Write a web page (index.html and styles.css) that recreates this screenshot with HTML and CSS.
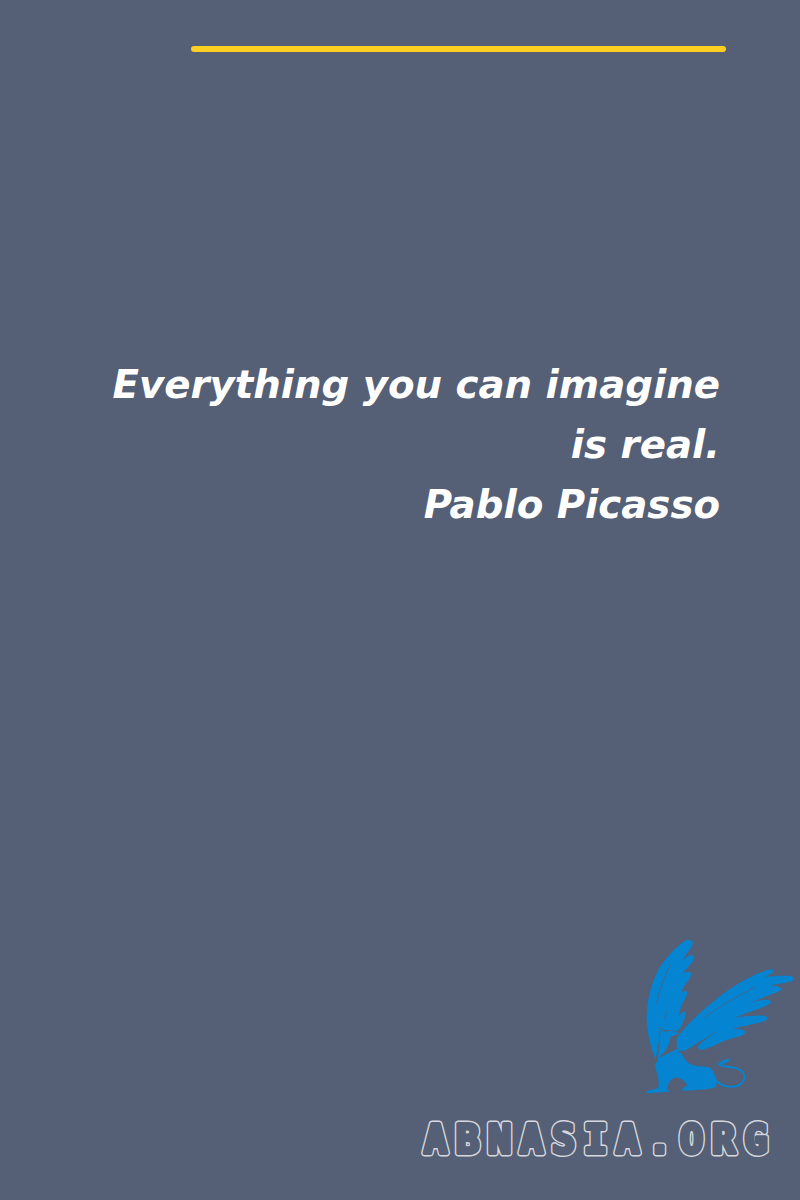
FILE: index.html
```html
<!DOCTYPE html>
<html lang="en">
<head>
<meta charset="utf-8">
<title>Everything you can imagine is real.</title>
<link rel="stylesheet" href="styles.css">
</head>
<body>
<main class="page">
  <div class="bar"></div>
  <blockquote class="quote">Everything you can imagine<br>is real.<br>Pablo Picasso</blockquote>
  <div class="brand">
    <svg class="griffin" viewBox="0 0 510 510" aria-hidden="true">
      <path class="fill" d="M77 388C60 345 49 300 50 255C52 195 72 130 105 90C125 65 145 45 165 32C175 26 190 30 188 42C185 55 170 70 157 92C165 85 180 72 188 76C197 80 192 92 182 102C172 114 165 122 158 130C165 128 175 122 181 128C188 134 178 148 170 158C162 168 158 175 155 188C160 184 168 178 172 188C172 198 160 212 154 228C150 238 148 248 148 258C154 250 160 240 166 246C172 252 160 275 150 295L140 305L92 298C88 325 82 360 77 388Z"/>
      <path class="cut" d="M122 105C105 135 88 175 80 220M110 245L102 265"/>
      <path class="fill" d="M140 325C180 270 250 210 310 170C350 145 390 125 422 118C432 118 432 128 422 132L405 142C430 138 465 136 485 139C494 142 492 152 482 155C460 160 440 162 420 166C435 168 450 170 454 175C456 182 444 186 430 191C405 200 375 212 350 222C375 214 400 208 415 209C426 212 425 222 412 226C385 238 345 250 315 263C345 258 385 256 405 257C414 260 414 270 402 274C375 282 340 288 310 296C325 298 340 298 345 302C350 310 340 316 325 320C300 326 280 332 262 342C245 350 225 358 212 360C202 358 202 350 210 342C220 332 232 325 240 318C215 330 190 348 165 362L140 362Z"/>
      <path class="cut" d="M225 262C260 235 310 205 375 172M232 325L255 306"/>
      <path class="head" d="M92 292L102 305L125 302L148 310L135 315L122 320L118 340L105 365L92 375L90 382L105 375L145 355L150 360L130 380L85 410L77 415L75 405L82 392L88 350Z"/>
      <path class="fill" d="M76 415L130 378L148 365L155 370C165 390 175 405 200 408L240 412C250 422 258 440 260 452L258 472L230 478L160 483L155 478L172 466C165 455 155 445 140 442L125 447C118 455 113 465 110 476L115 480L118 485L52 490L47 484L78 477L86 470C88 450 82 430 76 415Z"/>
      <path class="tail" d="M256 450C275 470 305 476 328 465C350 450 350 425 320 415C300 408 270 412 267 402"/>
      <path class="fill" d="M265 400L285 388L303 388L296 394L276 404Z"/>
    </svg>
    <svg class="wordmark" viewBox="0 0 360 50" role="img" aria-label="ABNASIA.ORG">
      <text class="word word-outer" x="4" y="38">ABNASIA.ORG</text>
      <text class="word word-inner" x="4" y="38" aria-hidden="true">ABNASIA.ORG</text>
    </svg>
  </div>
</main>
</body>
</html>
```
FILE: styles.css
```css
html, body {
  margin: 0;
  padding: 0;
}
.page {
  width: 800px;
  height: 1200px;
  box-sizing: border-box;
  background: #555f75;
  display: flex;
  flex-direction: column;
  overflow: hidden;
  padding-top: 46px;
}
.bar {
  width: 535px;
  height: 6px;
  margin-left: 191px;
  background: #ffcf21;
  border-radius: 3px;
}
.quote {
  margin: 303px 80px 0 80px;
  font-family: "DejaVu Sans", "Open Sans", sans-serif;
  font-style: italic;
  font-weight: 700;
  font-size: 38.7px;
  line-height: 60px;
  color: #fff;
  text-align: right;
}
.brand {
  margin-top: auto;
  display: flex;
  flex-direction: column;
  align-items: flex-end;
  padding-bottom: 35px;
}
.griffin {
  width: 170px;
  height: 170px;
  margin-bottom: 15px;
}
.fill { fill: #0484d1; }
.cut { fill: none; stroke: #555f75; stroke-width: 2.2; stroke-linecap: round; }
.head { fill: #0484d1; stroke: #555f75; stroke-width: 3; paint-order: stroke; }
.tail { fill: none; stroke: #0484d1; stroke-width: 6; stroke-linecap: round; }
.wordmark {
  width: 360px;
  height: 50px;
  margin-right: 20px;
}
.word {
  font-family: "DejaVu Sans Mono", monospace;
  font-weight: 700;
  font-size: 38.4px;
  letter-spacing: 8.9px;
  stroke-linejoin: round;
}
.word-outer { fill: #d6d8dd; stroke: #d6d8dd; stroke-width: 7; }
.word-inner { fill: #555f75; stroke: #555f75; stroke-width: 4.2; }
```
